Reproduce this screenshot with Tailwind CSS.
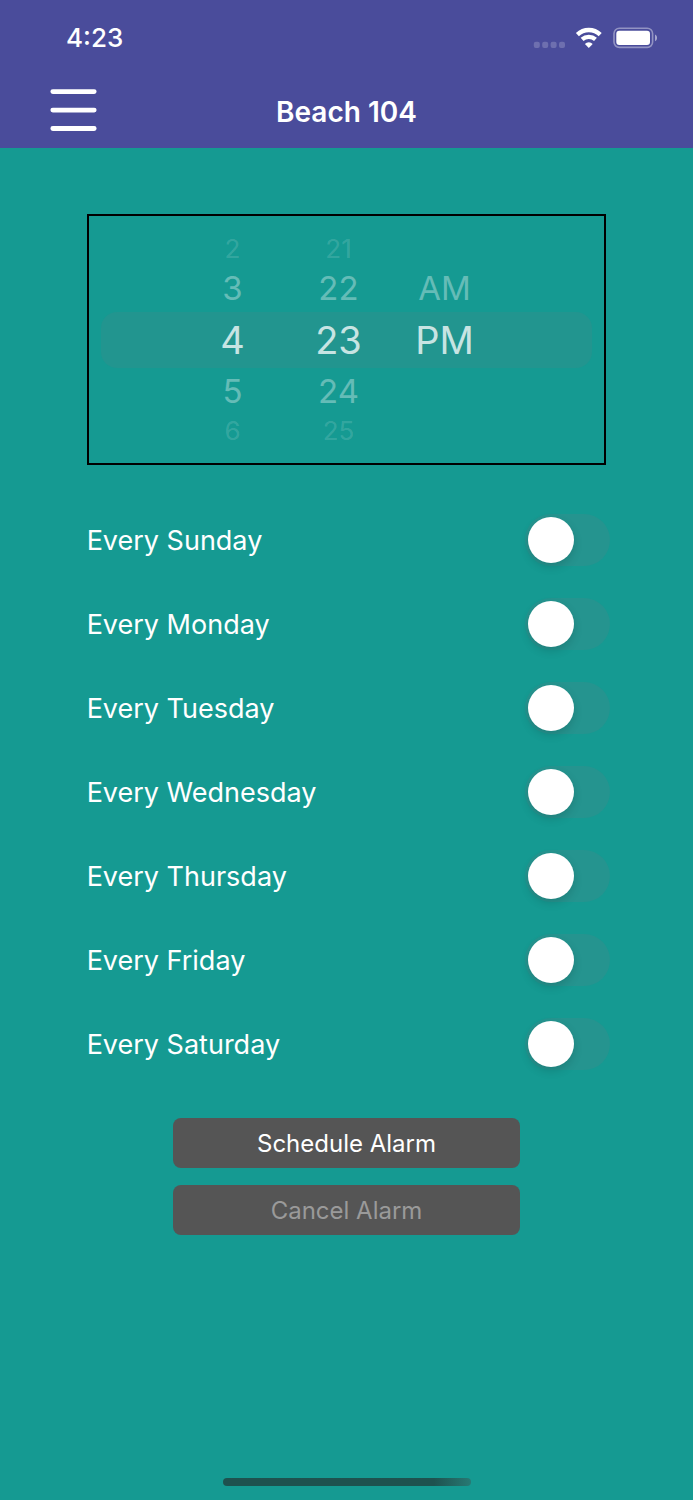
<!DOCTYPE html>
<html lang="en">

<head>
    <meta charset="UTF-8">
    <meta name="viewport" content="width=device-width, initial-scale=1.0">
    <title>Beach 104</title>
    <script src="https://cdn.jsdelivr.net/npm/@tailwindcss/browser@4"></script>
</head>

<body class="bg-[#159a92] text-white font-['Inter','Liberation_Sans',sans-serif]">
    <div class="min-h-screen flex flex-col">
        <!-- Header -->
        <header class="bg-[#4a4c9b] pb-1">
            <div class="h-[76px] flex items-center justify-between pl-[66px] pr-9">
                <span class="text-[26px] leading-8 font-medium">4:23</span>
                <svg class="w-[124px] h-6" viewBox="0 0 124 24" fill="none" aria-hidden="true">
                    <!-- Signal -->
                    <g fill="#fff" fill-opacity="0.2">
                        <rect x="0.8" y="15.8" width="6" height="6.2" rx="2" />
                        <rect x="9.2" y="15.8" width="6" height="6.2" rx="2" />
                        <rect x="17.6" y="15.8" width="6" height="6.2" rx="2" />
                        <rect x="26" y="15.8" width="6" height="6.2" rx="2" />
                    </g>
                    <!-- Wifi -->
                    <path d="M44.4 8.6a16.6 16.6 0 0 1 22.8 0" stroke="#fff" stroke-width="4.4" />
                    <path d="M49.1 13.4a10 10 0 0 1 13.4 0" stroke="#fff" stroke-width="4.2" />
                    <path d="M55.8 22l-3.9-4.1a5.7 5.7 0 0 1 7.8 0z" fill="#fff" />
                    <!-- Battery -->
                    <rect x="81" y="2.2" width="38.6" height="19.2" rx="5.4" stroke="#fff" stroke-opacity="0.4" stroke-width="1.6" />
                    <rect x="83.3" y="4.8" width="33.7" height="14.2" rx="3" fill="#fff" />
                    <path d="M122 8.4c1.4.6 2.1 1.9 2.1 3.4s-.7 2.8-2.1 3.4z" fill="#fff" fill-opacity="0.5" />
                </svg>
            </div>
            <div class="h-[68px] grid grid-cols-[1fr_auto_1fr] items-center px-[50px]">
                <button type="button" aria-label="Menu" class="w-12">
                    <svg class="w-12 h-11" viewBox="0 0 48 44" stroke="#fff" stroke-width="4.8" stroke-linecap="round">
                        <path d="M2.8 3.6h41.4M2.8 22.1h41.4M2.8 40.5h41.4" />
                    </svg>
                </button>
                <h1 class="pt-1 text-[28px] leading-8 font-semibold">Beach 104</h1>
            </div>
        </header>

        <main class="w-3/4 mx-auto pt-[66px]">
            <!-- Time picker -->
            <div class="border-2 border-black px-3 pt-[17px] pb-4">
                <div class="grid grid-rows-[79px_56px_79px]">
                    <div class="row-start-2 col-start-1 rounded-2xl bg-[#22958f]"></div>
                    <div class="row-start-1 row-span-3 col-start-1 flex justify-center pr-4 text-center">
                        <fieldset class="w-[106px]" aria-label="Hour">
                            <label class="block text-[26px] leading-[32px] text-white/15"><input type="radio" name="hour" value="2" class="sr-only">2</label>
                            <label class="block text-[33px] leading-[47px] text-white/35"><input type="radio" name="hour" value="3" class="sr-only">3</label>
                            <label class="block text-[38px] leading-[56px] text-white/75"><input type="radio" name="hour" value="4" class="sr-only" checked>4</label>
                            <label class="block text-[33px] leading-[47px] text-white/35"><input type="radio" name="hour" value="5" class="sr-only">5</label>
                            <label class="block text-[26px] leading-[32px] text-white/15"><input type="radio" name="hour" value="6" class="sr-only">6</label>
                        </fieldset>
                        <fieldset class="w-[106px]" aria-label="Minute">
                            <label class="block text-[26px] leading-[32px] text-white/15"><input type="radio" name="minute" value="21" class="sr-only">21</label>
                            <label class="block text-[33px] leading-[47px] text-white/35"><input type="radio" name="minute" value="22" class="sr-only">22</label>
                            <label class="block text-[38px] leading-[56px] text-white/75"><input type="radio" name="minute" value="23" class="sr-only" checked>23</label>
                            <label class="block text-[33px] leading-[47px] text-white/35"><input type="radio" name="minute" value="24" class="sr-only">24</label>
                            <label class="block text-[26px] leading-[32px] text-white/15"><input type="radio" name="minute" value="25" class="sr-only">25</label>
                        </fieldset>
                        <fieldset class="w-[106px] pt-8" aria-label="AM or PM">
                            <label class="block text-[33px] leading-[47px] text-white/35"><input type="radio" name="period" value="AM" class="sr-only">AM</label>
                            <label class="block text-[38px] leading-[56px] text-white/75"><input type="radio" name="period" value="PM" class="sr-only" checked>PM</label>
                        </fieldset>
                    </div>
                </div>
            </div>

            <!-- Repeat days -->
            <div class="mt-[49px] -mr-1 flex flex-col gap-8 text-[27px] leading-8">
                <label class="h-[52px] flex items-center justify-between">
                    <span class="pt-0.5">Every Sunday</span>
                    <input type="checkbox" role="switch" class="appearance-none w-[85px] h-[52px] rounded-full bg-[#25948f] p-[3px] before:block before:size-[46px] before:rounded-full before:bg-white before:shadow-[0_4px_10px_rgba(0,0,0,0.14)] checked:bg-green-500 checked:before:ml-auto">
                </label>
                <label class="h-[52px] flex items-center justify-between">
                    <span class="pt-0.5">Every Monday</span>
                    <input type="checkbox" role="switch" class="appearance-none w-[85px] h-[52px] rounded-full bg-[#25948f] p-[3px] before:block before:size-[46px] before:rounded-full before:bg-white before:shadow-[0_4px_10px_rgba(0,0,0,0.14)] checked:bg-green-500 checked:before:ml-auto">
                </label>
                <label class="h-[52px] flex items-center justify-between">
                    <span class="pt-0.5">Every Tuesday</span>
                    <input type="checkbox" role="switch" class="appearance-none w-[85px] h-[52px] rounded-full bg-[#25948f] p-[3px] before:block before:size-[46px] before:rounded-full before:bg-white before:shadow-[0_4px_10px_rgba(0,0,0,0.14)] checked:bg-green-500 checked:before:ml-auto">
                </label>
                <label class="h-[52px] flex items-center justify-between">
                    <span class="pt-0.5">Every Wednesday</span>
                    <input type="checkbox" role="switch" class="appearance-none w-[85px] h-[52px] rounded-full bg-[#25948f] p-[3px] before:block before:size-[46px] before:rounded-full before:bg-white before:shadow-[0_4px_10px_rgba(0,0,0,0.14)] checked:bg-green-500 checked:before:ml-auto">
                </label>
                <label class="h-[52px] flex items-center justify-between">
                    <span class="pt-0.5">Every Thursday</span>
                    <input type="checkbox" role="switch" class="appearance-none w-[85px] h-[52px] rounded-full bg-[#25948f] p-[3px] before:block before:size-[46px] before:rounded-full before:bg-white before:shadow-[0_4px_10px_rgba(0,0,0,0.14)] checked:bg-green-500 checked:before:ml-auto">
                </label>
                <label class="h-[52px] flex items-center justify-between">
                    <span class="pt-0.5">Every Friday</span>
                    <input type="checkbox" role="switch" class="appearance-none w-[85px] h-[52px] rounded-full bg-[#25948f] p-[3px] before:block before:size-[46px] before:rounded-full before:bg-white before:shadow-[0_4px_10px_rgba(0,0,0,0.14)] checked:bg-green-500 checked:before:ml-auto">
                </label>
                <label class="h-[52px] flex items-center justify-between">
                    <span class="pt-0.5">Every Saturday</span>
                    <input type="checkbox" role="switch" class="appearance-none w-[85px] h-[52px] rounded-full bg-[#25948f] p-[3px] before:block before:size-[46px] before:rounded-full before:bg-white before:shadow-[0_4px_10px_rgba(0,0,0,0.14)] checked:bg-green-500 checked:before:ml-auto">
                </label>
            </div>

            <!-- Actions -->
            <div class="w-2/3 mx-auto mt-12 flex flex-col gap-[17px] text-[24px] leading-8">
                <button type="button" class="h-[50px] pt-0.5 rounded-lg bg-[#555555]">Schedule Alarm</button>
                <button type="button" class="h-[50px] pt-0.5 rounded-lg bg-[#555555] text-[#9a9a9a]" disabled>Cancel Alarm</button>
            </div>
        </main>

        <!-- Home indicator -->
        <div class="mt-auto mx-auto mb-[14px] w-[248px] h-2 rounded-full bg-linear-to-r from-[#1e524f] from-85% to-[#277a74]"></div>
    </div>
</body>

</html>
